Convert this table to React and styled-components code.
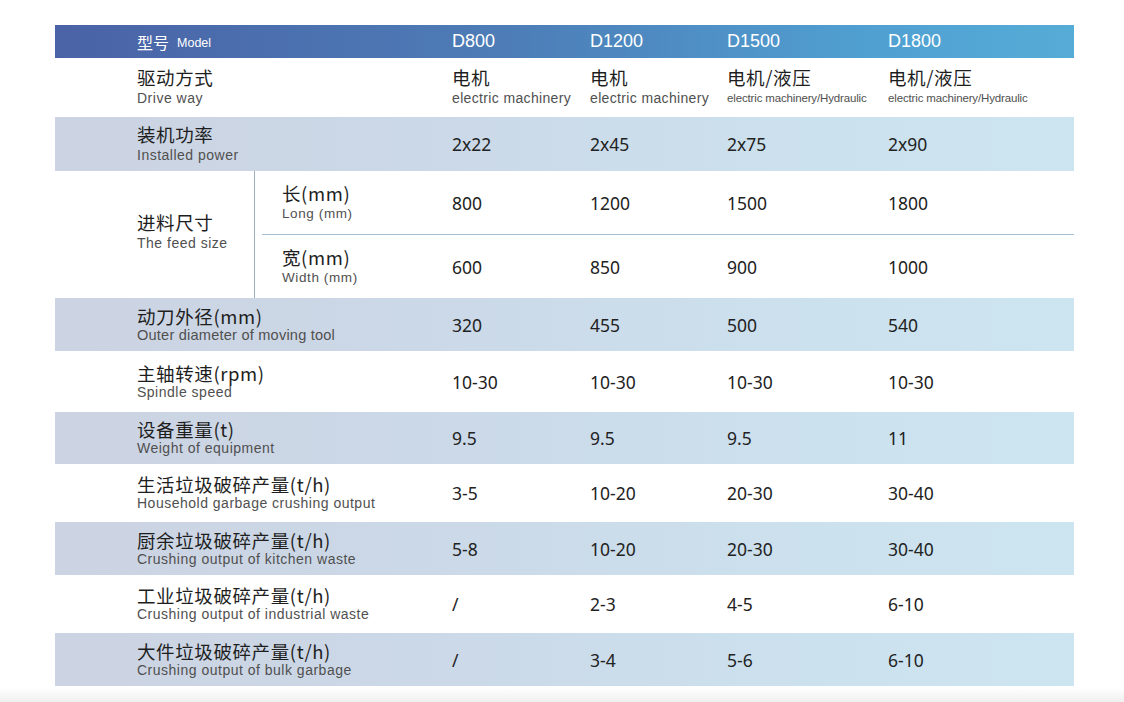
import React from 'react'
import styled, { createGlobalStyle } from 'styled-components'

let GlobalStyle = createGlobalStyle`
  html, body {
    margin: 0;
    padding: 0;
    background: #ffffff;
  }
  body {
    font-family: "Liberation Sans", "Noto Sans CJK SC", sans-serif;
  }
`

let cn = '"Noto Sans CJK SC", "Noto Sans", sans-serif'
let en = '"Liberation Sans", Arial, sans-serif'
let num = '"Noto Sans", "Open Sans", sans-serif'

let widths = [138, 137, 161, 186]

let models = ['D800', 'D1200', 'D1500', 'D1800']

let rows = [
  { cn: '装机功率', en: 'Installed power', h: 54, shade: true, loose: true, values: ['2x22', '2x45', '2x75', '2x90'] },
  { feed: true },
  { cn: '动刀外径(mm)', en: 'Outer diameter of moving tool', h: 53, shade: true, tight: true, values: ['320', '455', '500', '540'] },
  { cn: '主轴转速(rpm)', en: 'Spindle speed', h: 61, values: ['10-30', '10-30', '10-30', '10-30'] },
  { cn: '设备重量(t)', en: 'Weight of equipment', h: 52, shade: true, values: ['9.5', '9.5', '9.5', '11'] },
  { cn: '生活垃圾破碎产量(t/h)', en: 'Household garbage crushing output', h: 58, values: ['3-5', '10-20', '20-30', '30-40'] },
  { cn: '厨余垃圾破碎产量(t/h)', en: 'Crushing output of kitchen waste', h: 53, shade: true, values: ['5-8', '10-20', '20-30', '30-40'] },
  { cn: '工业垃圾破碎产量(t/h)', en: 'Crushing output of industrial waste', h: 58, values: ['/', '2-3', '4-5', '6-10'] },
  { cn: '大件垃圾破碎产量(t/h)', en: 'Crushing output of bulk garbage', h: 53, shade: true, values: ['/', '3-4', '5-6', '6-10'] }
]

let drive = [
  { cn: '电机', en: 'electric machinery' },
  { cn: '电机', en: 'electric machinery' },
  { cn: '电机/液压', en: 'electric machinery/Hydraulic', small: true },
  { cn: '电机/液压', en: 'electric machinery/Hydraulic', small: true }
]

let App = () => (
  <Page>
    <GlobalStyle />
    <Table>
      <HeaderRow>
        <LabelCell>
          <HeadCn>型号</HeadCn>
          <HeadEn>Model</HeadEn>
        </LabelCell>
        {models.map((m, i) => (
          <HeadCell key={m} w={widths[i]}>{m}</HeadCell>
        ))}
      </HeaderRow>

      <Row h={59}>
        <LabelCell>
          <LabelStack>
            <Cn>驱动方式</Cn>
            <En loose>Drive way</En>
          </LabelStack>
        </LabelCell>
        {drive.map((d, i) => (
          <ValueCell key={i} w={widths[i]}>
            <LabelStack>
              <Cn>{d.cn}</Cn>
              <DriveEn small={d.small}>{d.en}</DriveEn>
            </LabelStack>
          </ValueCell>
        ))}
      </Row>

      {rows.map((r, idx) => r.feed ? (
        <Row key={idx} h={127}>
          <FeedLabel>
            <LabelStack>
              <Cn>进料尺寸</Cn>
              <En loose>The feed size</En>
            </LabelStack>
          </FeedLabel>
          <SubTable>
            <SubRow h={64} divider>
              <SubLabel>
                <LabelStack>
                  <Cn>长(mm)</Cn>
                  <SubEn>Long (mm)</SubEn>
                </LabelStack>
              </SubLabel>
              {['800', '1200', '1500', '1800'].map((v, i) => (
                <ValueCell key={i} w={widths[i]}><Value>{v}</Value></ValueCell>
              ))}
            </SubRow>
            <SubRow h={63}>
              <SubLabel>
                <LabelStack>
                  <Cn>宽(mm)</Cn>
                  <SubEn>Width (mm)</SubEn>
                </LabelStack>
              </SubLabel>
              {['600', '850', '900', '1000'].map((v, i) => (
                <ValueCell key={i} w={widths[i]}><Value>{v}</Value></ValueCell>
              ))}
            </SubRow>
          </SubTable>
        </Row>
      ) : (
        <Row key={idx} h={r.h} shade={r.shade}>
          <LabelCell>
            <LabelStack>
              <Cn>{r.cn}</Cn>
              <En tight={r.tight} loose={r.loose}>{r.en}</En>
            </LabelStack>
          </LabelCell>
          {r.values.map((v, i) => (
            <ValueCell key={i} w={widths[i]}><Value>{v}</Value></ValueCell>
          ))}
        </Row>
      ))}
    </Table>
    <BottomFade />
  </Page>
)

let Page = styled.div`
  width: 1124px;
  height: 702px;
  padding: 25px 0 0 55px;
  box-sizing: border-box;
  position: relative;
  overflow: hidden;
`

let Table = styled.div`
  width: 1019px;
  display: flex;
  flex-direction: column;
`

let HeaderRow = styled.div`
  display: flex;
  align-items: center;
  height: 33px;
  background: linear-gradient(90deg, #4a63a6 0%, #4d7db7 45%, #50a0d2 80%, #55acd6 100%);
  color: #ffffff;
`

let Row = styled.div`
  display: flex;
  align-items: stretch;
  height: ${p => p.h}px;
  background: ${p => p.shade
    ? 'linear-gradient(90deg, #ccd3e2 0%, #cbd9e8 40%, #cce1ee 75%, #cde5f1 100%)'
    : '#ffffff'};
`

let LabelCell = styled.div`
  width: 397px;
  box-sizing: border-box;
  padding-left: 82px;
  display: flex;
  align-items: center;
`

let FeedLabel = styled.div`
  width: 199px;
  box-sizing: border-box;
  padding-left: 82px;
  padding-bottom: 4px;
  display: flex;
  align-items: center;
`

let SubTable = styled.div`
  flex: 1;
  display: flex;
  flex-direction: column;
  border-left: 1px solid #9eaebf;
`

let SubRow = styled.div`
  display: flex;
  height: ${p => p.h}px;
  box-sizing: border-box;
  margin-left: 7px;
  border-bottom: ${p => p.divider ? '1.5px solid #a3bdd2' : 'none'};
`

let SubLabel = styled.div`
  width: 190px;
  box-sizing: border-box;
  padding-left: 20px;
  display: flex;
  align-items: center;
`

let LabelStack = styled.div`
  display: flex;
  flex-direction: column;
`

let Cn = styled.span`
  font-family: ${cn};
  font-size: 18.5px;
  line-height: 21px;
  letter-spacing: 0.6px;
  color: #1e1e1e;
  white-space: nowrap;
`

let En = styled.span`
  font-family: ${en};
  font-size: ${p => p.tight ? '14.6px' : '14px'};
  line-height: ${p => p.loose ? '20px' : '17px'};
  color: #505050;
  letter-spacing: ${p => p.tight ? '0.2px' : '0.5px'};
  white-space: nowrap;
`

let SubEn = styled(En)`
  font-size: 13.5px;
  line-height: 19px;
  letter-spacing: 0.6px;
`

let DriveEn = styled.span`
  font-family: ${en};
  font-size: ${p => p.small ? '11.5px' : '14px'};
  line-height: 20px;
  color: #505050;
  letter-spacing: ${p => p.small ? '-0.15px' : '0.35px'};
  white-space: nowrap;
`

let HeadCn = styled.span`
  font-family: ${cn};
  font-size: 16px;
  margin-right: 8px;
`

let HeadEn = styled.span`
  font-family: ${en};
  font-size: 12.5px;
  padding-top: 3px;
`

let HeadCell = styled.div`
  width: ${p => p.w}px;
  font-family: ${en};
  font-size: 18px;
  color: #ffffff;
`

let ValueCell = styled.div`
  width: ${p => p.w}px;
  flex-shrink: 0;
  display: flex;
  align-items: center;
`

let Value = styled.span`
  font-family: ${num};
  font-size: 17.5px;
  color: #222222;
`

let BottomFade = styled.div`
  position: absolute;
  left: 0;
  right: 0;
  bottom: 0;
  height: 14px;
  background: linear-gradient(180deg, rgba(240, 240, 240, 0) 0%, #efefef 100%);
`

export default App
